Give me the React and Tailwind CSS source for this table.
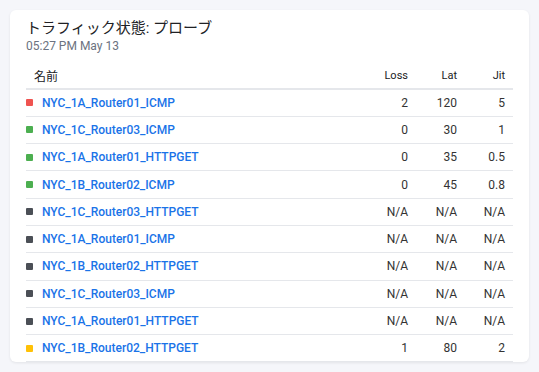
import React from 'react';

const rows = [
  { name: 'NYC_1A_Router01_ICMP', status: 'bg-[#ef5350]', loss: '2', lat: '120', jit: '5' },
  { name: 'NYC_1C_Router03_ICMP', status: 'bg-[#4caf50]', loss: '0', lat: '30', jit: '1' },
  { name: 'NYC_1A_Router01_HTTPGET', status: 'bg-[#4caf50]', loss: '0', lat: '35', jit: '0.5' },
  { name: 'NYC_1B_Router02_ICMP', status: 'bg-[#4caf50]', loss: '0', lat: '45', jit: '0.8' },
  { name: 'NYC_1C_Router03_HTTPGET', status: 'bg-[#4b4f56]', loss: 'N/A', lat: 'N/A', jit: 'N/A' },
  { name: 'NYC_1A_Router01_ICMP', status: 'bg-[#4b4f56]', loss: 'N/A', lat: 'N/A', jit: 'N/A' },
  { name: 'NYC_1B_Router02_HTTPGET', status: 'bg-[#4b4f56]', loss: 'N/A', lat: 'N/A', jit: 'N/A' },
  { name: 'NYC_1C_Router03_ICMP', status: 'bg-[#4b4f56]', loss: 'N/A', lat: 'N/A', jit: 'N/A' },
  { name: 'NYC_1A_Router01_HTTPGET', status: 'bg-[#4b4f56]', loss: 'N/A', lat: 'N/A', jit: 'N/A' },
  { name: 'NYC_1B_Router02_HTTPGET', status: 'bg-[#ffc107]', loss: '1', lat: '80', jit: '2' },
];

const App = () => {
  return (
    <div className="h-[372px] w-[539px] overflow-hidden bg-[#f5f6fa] p-[10px] font-['Roboto','Noto_Sans_CJK_JP',sans-serif]">
      <div className="h-[352px] overflow-hidden rounded-md bg-white px-4 pt-[8px] shadow-[0_1px_3px_rgba(0,0,0,0.08)]">
        {/* Header */}
        <h2 className="text-[15px] leading-[20px] text-[#202124] font-['Roboto','Noto_Sans_CJK_JP',sans-serif]">
          トラフィック状態: プローブ
        </h2>
        <p className="text-[12px] leading-[16px] text-[#6b7280]">05:27 PM May 13</p>

        {/* Probe table */}
        <table className="mt-[14px] w-full border-collapse text-[12px]">
          <thead>
            <tr className="border-b-2 border-[#e5e7eb] text-[#202124]">
              <th className="h-[21px] pl-2 text-left align-top font-normal">名前</th>
              <th className="w-[50px] text-right align-top text-[11px] font-normal">Loss</th>
              <th className="w-[49px] text-right align-top text-[11px] font-normal">Lat</th>
              <th className="w-[56px] pr-2 text-right align-top text-[11px] font-normal">Jit</th>
            </tr>
          </thead>
          <tbody>
            {rows.map((r, i) => (
              <tr key={i} className="h-[27.3px] border-b border-[#e5e7eb] text-[#333]">
                <td>
                  <div className="flex items-center gap-[9px]">
                    <span className={`h-[7px] w-[7px] rounded-[1px] ${r.status}`} />
                    <span className="font-medium text-[#1a73e8]">{r.name}</span>
                  </div>
                </td>
                <td className="text-right">{r.loss}</td>
                <td className="text-right">{r.lat}</td>
                <td className="pr-2 text-right">{r.jit}</td>
              </tr>
            ))}
          </tbody>
        </table>
      </div>
    </div>
  );
};

export default App;
